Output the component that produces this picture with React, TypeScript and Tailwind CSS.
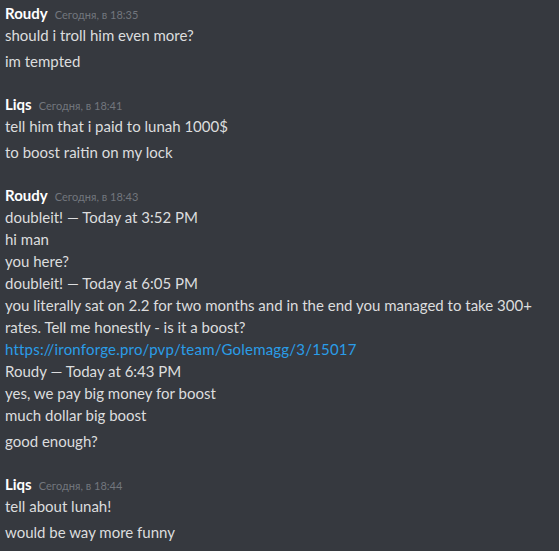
type Group = {
  author: string;
  time: string;
  messages: (string | JSX.Element)[][];
};

// each message is a list of lines (22px apart), messages are 4px apart
const GROUPS: Group[] = [
  {
    author: "Roudy",
    time: "Сегодня, в 18:35",
    messages: [["should i troll him even more?"], ["im tempted"]],
  },
  {
    author: "Liqs",
    time: "Сегодня, в 18:41",
    messages: [["tell him that i paid to lunah 1000$"], ["to boost raitin on my lock"]],
  },
  {
    author: "Roudy",
    time: "Сегодня, в 18:43",
    messages: [
      [
        "doubleit! — Today at 3:52 PM",
        "hi man",
        "you here?",
        "doubleit! — Today at 6:05 PM",
        "you literally sat on 2.2 for two months and in the end you managed to take 300+ rates. Tell me honestly - is it a boost?",
        <a key="link" href="#" className="text-[#2a9de8] tracking-[0.2px]">
          https://ironforge.pro/pvp/team/Golemagg/3/15017
        </a>,
        "Roudy — Today at 6:43 PM",
        "yes, we pay big money for boost",
        "much dollar big boost",
      ],
      ["good enough?"],
    ],
  },
  {
    author: "Liqs",
    time: "Сегодня, в 18:44",
    messages: [["tell about lunah!"], ["would be way more funny"]],
  },
];

export default function App() {
  return (
    <div
      className="w-[559px] h-[551px] overflow-hidden bg-[#36393f] px-[5px] pt-[3px]"
      style={{ fontFamily: "Lato, 'Noto Sans', sans-serif" }}
    >
      <div className="flex flex-col gap-[22px] w-[532px]">
        {GROUPS.map((g, i) => (
          <div key={i}>
            {/* Header */}
            <div className="flex items-baseline gap-[7px] h-[21px] leading-[21px]">
              <span className="text-white font-bold text-[15px]">{g.author}</span>
              <span className="text-[#72767d] text-[11px]">{g.time}</span>
            </div>

            {/* Messages */}
            <div className="flex flex-col gap-[4px]">
              {g.messages.map((m, j) => (
                <div key={j} className="text-[#dcddde] text-[15px] leading-[22px]">
                  {m.map((line, k) => (
                    <div key={k}>{line}</div>
                  ))}
                </div>
              ))}
            </div>
          </div>
        ))}
      </div>
    </div>
  );
}
